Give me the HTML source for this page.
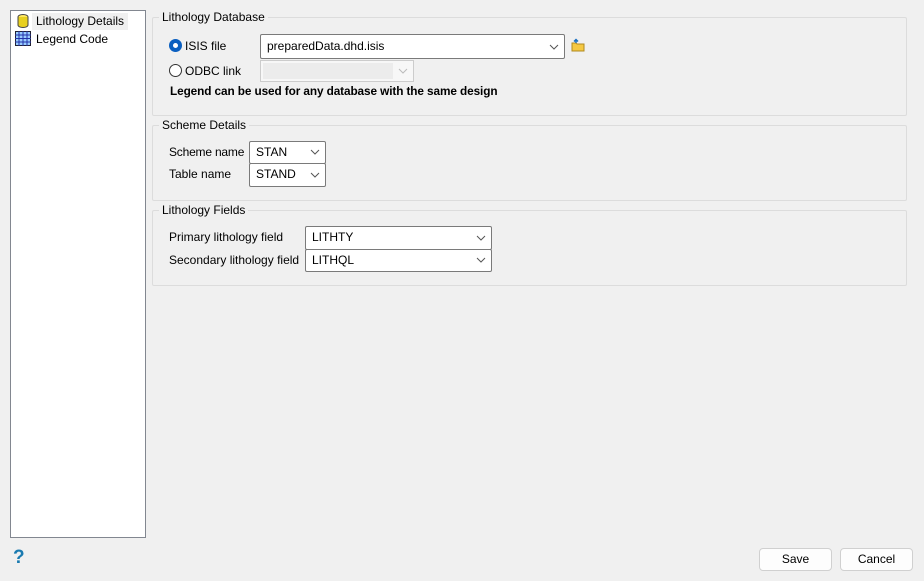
<!DOCTYPE html>
<html><head><meta charset="utf-8"><style>
*{box-sizing:border-box;margin:0;padding:0}
body{width:924px;height:581px;background:#f0f0f0;font-family:"Liberation Sans",sans-serif;font-size:12px;color:#000;position:relative;overflow:hidden}
.a{position:absolute;white-space:nowrap}
.grp{position:absolute;border:1px solid #dcdcdc;border-radius:2px}
.gt{position:absolute;background:#f0f0f0;padding:0 3px;top:-8px;left:6px;white-space:nowrap}
.cb{position:absolute;background:#fff;border:1px solid #7a7a7a;border-radius:2px;padding-left:6px;line-height:21px}
.chev{position:absolute;right:5px;top:7px;width:10px;height:6px}
.radio{position:absolute;width:13px;height:13px;border-radius:50%;border:1px solid #333;background:#fff}
.btn{position:absolute;background:#fdfdfd;border:1px solid #d0d0d0;border-radius:4px;text-align:center;line-height:21px}
</style></head><body>
<div class="a" style="left:10px;top:10px;width:136px;height:528px;background:#fff;border:1px solid #828790"></div>
<div class="a" style="left:32px;top:13px;width:96px;height:17px;background:#f0f0f0"></div>
<svg class="a" style="left:16px;top:13px" width="14" height="16" viewBox="0 0 14 16"><ellipse cx="7" cy="4" rx="5" ry="2.5" fill="#ffe860" stroke="#444"/><path d="M2 4v8c0 1.5 2.2 2.5 5 2.5s5-1 5-2.5V4" fill="#e8d020" stroke="#444"/></svg>
<span class="a" style="left:36px;top:14px">Lithology Details</span>
<svg class="a" style="left:15px;top:31px" width="16" height="15" viewBox="0 0 16 15"><rect x="0.5" y="0.5" width="15" height="14" fill="#9cf" stroke="#223"/><path d="M0 4h16M0 7.5h16M0 11h16M4 0v15M8 0v15M12 0v15" stroke="#23a"/></svg>
<span class="a" style="left:36px;top:32px">Legend Code</span>

<div class="grp" style="left:152px;top:17px;width:755px;height:99px"><span class="gt" style="top:-8px">Lithology Database</span></div>
<div class="radio" style="left:169px;top:39px;border:4px solid #0a5fc0"></div>
<span class="a" style="left:185px;top:39px">ISIS file</span>
<div class="cb" style="left:260px;top:34px;width:305px;height:25px;line-height:22px">preparedData.dhd.isis<svg class="chev" style="top:9px" viewBox="0 0 10 6"><path d="M1 1l4 4 4-4" fill="none" stroke="#555"/></svg></div>
<svg class="a" style="left:571px;top:38px" width="14" height="14" viewBox="0 0 14 14"><path d="M1 5h4l1 1h7v7H1z" fill="#f5c842" stroke="#b08a20"/><path d="M5 5V2M3 3.5l2-2 2 2" stroke="#1a70c0" stroke-width="1.5" fill="none"/></svg>
<div class="radio" style="left:169px;top:64px"></div>
<span class="a" style="left:185px;top:64px">ODBC link</span>
<div class="a" style="left:260px;top:60px;width:154px;height:22px;border:1px solid #ccc;background:#f7f7f7"><div class="a" style="left:2px;top:2px;width:130px;height:16px;background:#ececec"></div><svg class="chev" style="top:7px" viewBox="0 0 10 6"><path d="M1 1l4 4 4-4" fill="none" stroke="#bbb"/></svg></div>
<span class="a" style="left:170px;top:84px;font-weight:bold;font-size:11.8px;letter-spacing:-0.1px">Legend can be used for any database with the same design</span>

<div class="grp" style="left:152px;top:125px;width:755px;height:76px"><span class="gt">Scheme Details</span></div>
<span class="a" style="left:169px;top:145px;letter-spacing:-0.2px">Scheme name</span>
<div class="cb" style="left:249px;top:141px;width:77px;height:23px">STAN<svg class="chev" viewBox="0 0 10 6"><path d="M1 1l4 4 4-4" fill="none" stroke="#555"/></svg></div>
<span class="a" style="left:169px;top:167px">Table name</span>
<div class="cb" style="left:249px;top:163px;width:77px;height:24px">STAND<svg class="chev" style="top:8px" viewBox="0 0 10 6"><path d="M1 1l4 4 4-4" fill="none" stroke="#555"/></svg></div>

<div class="grp" style="left:152px;top:210px;width:755px;height:76px"><span class="gt">Lithology Fields</span></div>
<span class="a" style="left:169px;top:230px">Primary lithology field</span>
<div class="cb" style="left:305px;top:226px;width:187px;height:24px">LITHTY<svg class="chev" style="top:8px" viewBox="0 0 10 6"><path d="M1 1l4 4 4-4" fill="none" stroke="#555"/></svg></div>
<span class="a" style="left:169px;top:253px">Secondary lithology field</span>
<div class="cb" style="left:305px;top:249px;width:187px;height:23px">LITHQL<svg class="chev" viewBox="0 0 10 6"><path d="M1 1l4 4 4-4" fill="none" stroke="#555"/></svg></div>

<span class="a" style="left:13px;top:547px;font-size:19px;font-weight:bold;color:#1a7ab0">?</span>
<div class="btn" style="left:759px;top:548px;width:73px;height:23px">Save</div>
<div class="btn" style="left:840px;top:548px;width:73px;height:23px">Cancel</div>
</body></html>
